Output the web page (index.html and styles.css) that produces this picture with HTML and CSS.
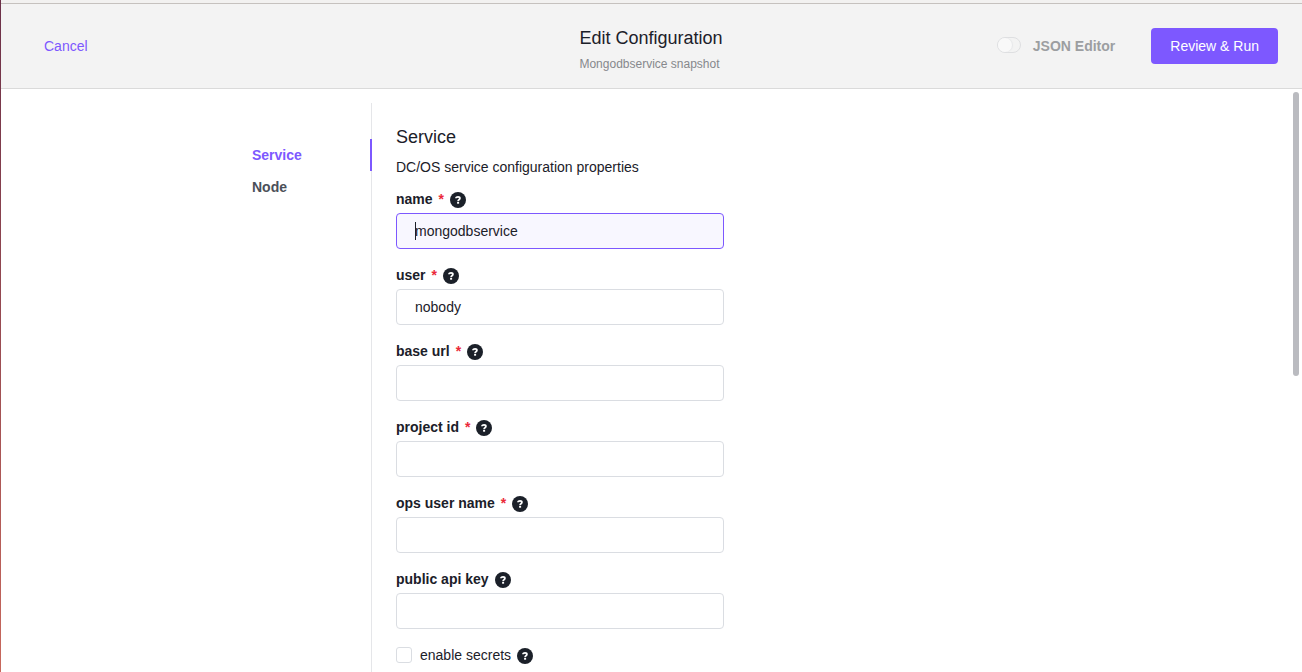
FILE: index.html
```html
<!DOCTYPE html>
<html lang="en">
<head>
<meta charset="utf-8">
<meta name="viewport" content="width=device-width, initial-scale=1">
<title>Edit Configuration</title>
<link rel="stylesheet" href="styles.css">
</head>
<body>
<svg class="sprite" aria-hidden="true">
  <symbol id="help" viewBox="0 0 16 16">
    <circle cx="8" cy="8" r="8" fill="#1b2029"/>
    <path d="M6 6.300C6 5.200 6.900 4.800 8 4.800s1.900.5 1.900 1.500c0 .8-.4 1.100-.9 1.400-.6.400-.9.700-.9 1.500" fill="none" stroke="#fff" stroke-width="1.800"/>
    <rect x="7.100" y="10" width="2" height="1.700" fill="#fff"/>
  </symbol>
</svg>
<div class="page">
  <header class="header">
    <div class="header-start"><button type="button" class="link-button">Cancel</button></div>
    <div class="header-title">
      <h1 class="title">Edit Configuration</h1>
      <p class="subtitle">Mongodbservice snapshot</p>
    </div>
    <div class="header-end">
      <label class="toggle"><input type="checkbox" class="toggle-input">JSON Editor</label>
      <button type="button" class="primary-button">Review &amp; Run</button>
    </div>
  </header>
  <main class="main">
    <div class="container">
      <nav class="tabs">
        <a class="tab tab-active" href="#service">Service</a>
        <a class="tab" href="#node">Node</a>
      </nav>
      <form class="form" id="service">
        <h2 class="heading">Service</h2>
        <p class="description">DC/OS service configuration properties</p>
        <div class="field">
          <div class="label-row"><label for="name">name</label><span class="required">*</span><svg class="help"><use href="#help"/></svg></div>
          <div class="input-wrap"><input class="input input-focused" id="name" type="text" value="mongodbservice"><span class="caret"></span></div>
        </div>
        <div class="field">
          <div class="label-row"><label for="user">user</label><span class="required">*</span><svg class="help"><use href="#help"/></svg></div>
          <input class="input" id="user" type="text" value="nobody">
        </div>
        <div class="field">
          <div class="label-row"><label for="base-url">base url</label><span class="required">*</span><svg class="help"><use href="#help"/></svg></div>
          <input class="input" id="base-url" type="text">
        </div>
        <div class="field">
          <div class="label-row"><label for="project-id">project id</label><span class="required">*</span><svg class="help"><use href="#help"/></svg></div>
          <input class="input" id="project-id" type="text">
        </div>
        <div class="field">
          <div class="label-row"><label for="ops-user">ops user name</label><span class="required">*</span><svg class="help"><use href="#help"/></svg></div>
          <input class="input" id="ops-user" type="text">
        </div>
        <div class="field">
          <div class="label-row"><label for="api-key">public api key</label><svg class="help"><use href="#help"/></svg></div>
          <input class="input" id="api-key" type="text">
        </div>
        <div class="check-row"><input class="checkbox" id="secrets" type="checkbox"><label for="secrets">enable secrets</label><svg class="help"><use href="#help"/></svg></div>
      </form>
    </div>
    <div class="scroll-thumb"></div>
  </main>
</div>
</body>
</html>
```
FILE: styles.css
```css
*,
*::before,
*::after {
  box-sizing: border-box;
}

body {
  margin: 0;
  background: #fff;
  color: #1b2029;
  font: 14px/20px "Liberation Sans", Arial, sans-serif;
}

button,
input {
  font: inherit;
  color: inherit;
  margin: 0;
}

h1,
h2,
p {
  margin: 0;
  font-weight: 400;
}

.sprite {
  position: absolute;
  width: 0;
  height: 0;
}

.page {
  position: relative;
  display: flex;
  flex-direction: column;
  height: 100vh;
  overflow: hidden;
}

.page::before {
  content: "";
  position: absolute;
  top: 0;
  bottom: 0;
  left: 0;
  z-index: 1;
  width: 1px;
  background: linear-gradient(#6b3048, #c8685c);
}

.page::after {
  content: "";
  position: absolute;
  top: 0;
  left: 0;
  right: 0;
  height: 4px;
  background: #f2f1f0;
  border-bottom: 1px solid #c5c1be;
}

.header {
  display: grid;
  grid-template-columns: 1fr auto 1fr;
  align-items: center;
  flex: none;
  padding: 16px 24px 12px;
  background: #f3f3f3;
  border-bottom: 1px solid #dadada;
}

.header-start {
  padding-left: 20px;
}

.link-button {
  padding: 0;
  border: 0;
  background: none;
  color: #7d58ff;
}

.header-title {
  padding-top: 8px;
}

.title {
  font-size: 18px;
  line-height: 28px;
}

.subtitle {
  color: #86888c;
  font-size: 12px;
  line-height: 24px;
}

.header-end {
  display: flex;
  justify-content: flex-end;
  align-items: center;
  gap: 36px;
}

.toggle {
  display: flex;
  align-items: center;
  gap: 12px;
  color: #9c9ea1;
  font-weight: 700;
}

.toggle-input {
  appearance: none;
  display: flex;
  width: 24px;
  height: 16px;
  margin-bottom: 2px;
  border: 1px solid #dedfe1;
  border-radius: 8px;
  background: #f3f3f3;
}

.toggle-input::before {
  content: "";
  width: 14px;
  height: 14px;
  border-radius: 50%;
  background: #f9f9f9;
  box-shadow: 1px 0 1px #e6e7e9;
}

.primary-button {
  height: 36px;
  padding: 0 19px;
  border: 0;
  border-radius: 4px;
  background: #7d58ff;
  color: #fff;
}

.main {
  position: relative;
  flex: 1;
  min-height: 0;
  overflow: hidden;
}

.container {
  display: flex;
  max-width: 846px;
  min-height: 100%;
  margin: 0 auto;
  padding-top: 14px;
}

.tabs {
  flex: none;
  width: 144px;
  padding-top: 36px;
  border-right: 1px solid #e5e6e9;
}

.tab {
  position: relative;
  display: block;
  padding: 6px 24px;
  color: #4b5059;
  font-weight: 700;
  text-decoration: none;
}

.tab-active {
  color: #7d58ff;
}

.tab-active::after {
  content: "";
  position: absolute;
  top: 0;
  right: -1px;
  bottom: 0;
  width: 2px;
  background: #7d58ff;
}

.form {
  flex: 1;
  padding: 22px 0 24px 24px;
}

.heading {
  margin-bottom: 8px;
  font-size: 18px;
  line-height: 24px;
}

.description {
  margin-bottom: 12px;
}

.field {
  max-width: 328px;
  margin-bottom: 16px;
}

.label-row {
  display: flex;
  align-items: center;
  gap: 6px;
  margin-bottom: 4px;
  font-weight: 700;
}

.required {
  color: #eb293a;
}

.help {
  flex: none;
  width: 16px;
  height: 16px;
  margin-top: 2px;
}

.input-wrap {
  position: relative;
}

.input {
  display: block;
  width: 100%;
  height: 36px;
  padding: 0 18px;
  border: 1px solid #dadde2;
  border-radius: 4px;
  background: #fff;
  outline: 0;
}

.input-focused {
  border-color: #7d58ff;
  background: #f8f7ff;
}

.caret {
  position: absolute;
  top: 9px;
  left: 19px;
  width: 1px;
  height: 18px;
  background: #1b2029;
}

.check-row {
  display: flex;
  align-items: center;
  gap: 6px;
}

.checkbox {
  appearance: none;
  width: 16px;
  height: 16px;
  margin-right: 2px;
  border: 1px solid #dadde2;
  border-radius: 3px;
  background: #fff;
}

.scroll-thumb {
  position: absolute;
  top: 3px;
  right: 3px;
  width: 6px;
  height: 284px;
  border-radius: 3px;
  background: #babbc0;
}
```
